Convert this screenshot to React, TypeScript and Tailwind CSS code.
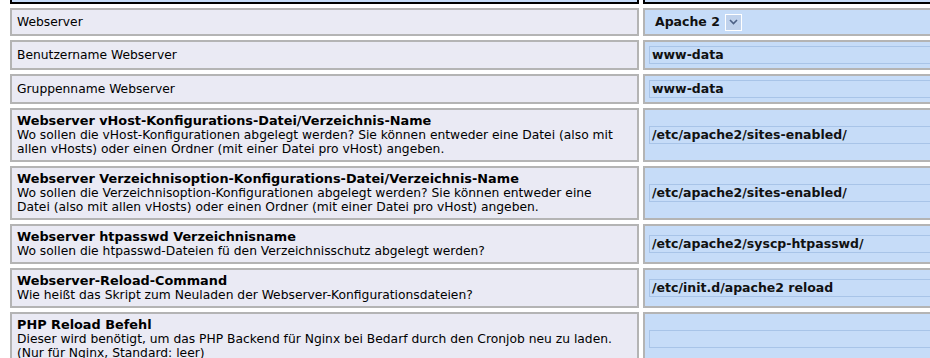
import React from "react";

const leftCell =
  "w-[629px] shrink-0 border-2 border-[#b4b4b4] bg-[#eaeaf4] px-[5px] py-[4px] flex flex-col justify-center text-black";
const rightCell =
  "w-[340px] shrink-0 border-2 border-[#b4b4b4] bg-[#c6dcf8] pl-[4px] py-[4px] flex items-center";

function Input({ value }: { value: string }) {
  return (
    <div className="h-[18px] w-full border border-[#a8c4e8] bg-[#c6dcf8] pl-[2px] flex items-center font-bold text-[12.5px] text-[#111] whitespace-nowrap">
      {value}
    </div>
  );
}

type Row = { title: string; bold?: boolean; lines?: string[]; value?: string; select?: boolean };

const rows: Row[] = [
  { title: "Webserver", select: true },
  { title: "Benutzername Webserver", value: "www-data" },
  { title: "Gruppenname Webserver", value: "www-data" },
  {
    title: "Webserver vHost-Konfigurations-Datei/Verzeichnis-Name",
    bold: true,
    lines: [
      "Wo sollen die vHost-Konfigurationen abgelegt werden? Sie können entweder eine Datei (also mit",
      "allen vHosts) oder einen Ordner (mit einer Datei pro vHost) angeben.",
    ],
    value: "/etc/apache2/sites-enabled/",
  },
  {
    title: "Webserver Verzeichnisoption-Konfigurations-Datei/Verzeichnis-Name",
    bold: true,
    lines: [
      "Wo sollen die Verzeichnisoption-Konfigurationen abgelegt werden? Sie können entweder eine",
      "Datei (also mit allen vHosts) oder einen Ordner (mit einer Datei pro vHost) angeben.",
    ],
    value: "/etc/apache2/sites-enabled/",
  },
  {
    title: "Webserver htpasswd Verzeichnisname",
    bold: true,
    lines: ["Wo sollen die htpasswd-Dateien fü den Verzeichnisschutz abgelegt werden?"],
    value: "/etc/apache2/syscp-htpasswd/",
  },
  {
    title: "Webserver-Reload-Command",
    bold: true,
    lines: ["Wie heißt das Skript zum Neuladen der Webserver-Konfigurationsdateien?"],
    value: "/etc/init.d/apache2 reload",
  },
  {
    title: "PHP Reload Befehl",
    bold: true,
    lines: [
      "Dieser wird benötigt, um das PHP Backend für Nginx bei Bedarf durch den Cronjob neu zu laden.",
      "(Nur für Nginx, Standard: leer)",
    ],
    value: "",
  },
];

export default function App() {
  return (
    <div className="w-[930px] h-[358px] overflow-hidden bg-white font-['DejaVu_Sans',sans-serif] text-[12.3px] leading-[14px]">
      <div className="pl-[10px] flex flex-col gap-[4px] w-[1000px]">
        <div className="flex gap-[4px] h-[4px]">
          <div className="w-[629px] shrink-0 border-x-2 border-b-2 border-black bg-[#c6dcf8]" />
          <div className="w-[340px] shrink-0 border-x-2 border-b-2 border-black bg-[#c6dcf8]" />
        </div>
        {rows.map((r, i) => (
          <div key={i} className="flex gap-[4px] items-stretch">
            <div className={leftCell}>
              <div className={r.bold ? "font-bold text-[12.85px] whitespace-nowrap" : "whitespace-nowrap"}>
                {r.title}
              </div>
              {r.lines?.map((l, j) => (
                <div key={j} className="whitespace-nowrap">
                  {l}
                </div>
              ))}
            </div>
            <div className={rightCell}>
              {r.select ? (
                <div className="h-[16px] flex items-center gap-[5px] pl-[6px]">
                  <span className="font-bold text-[12.5px] text-[#111]">Apache 2</span>
                  <span className="w-[17px] h-[17px] border border-white bg-[#c0d2ec] flex items-center justify-center">
                    <svg width="9" height="6" viewBox="0 0 9 6">
                      <path d="M1 1 L4.5 4.5 L8 1" fill="none" stroke="#4d6185" strokeWidth="1.6" />
                    </svg>
                  </span>
                </div>
              ) : (
                <Input value={r.value ?? ""} />
              )}
            </div>
          </div>
        ))}
      </div>
    </div>
  );
}
